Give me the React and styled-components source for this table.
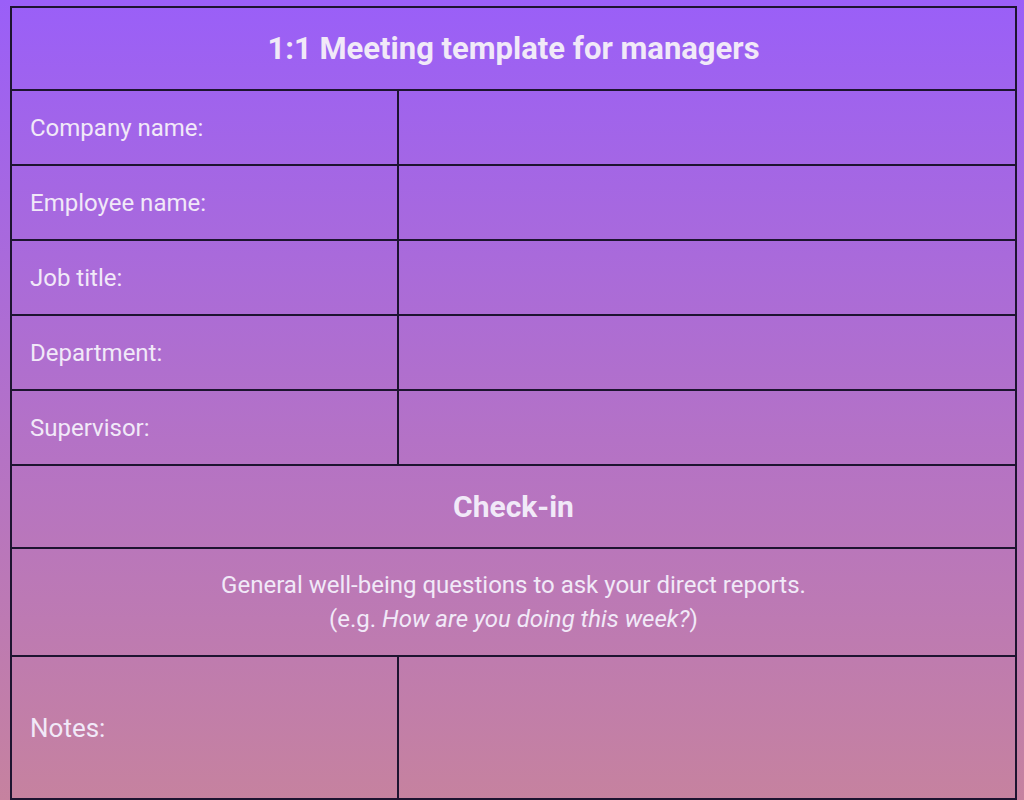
import React from "react";
import styled, { createGlobalStyle } from "styled-components";

const GlobalStyle = createGlobalStyle`
  html, body {
    margin: 0;
    padding: 0;
  }
  body {
    background: linear-gradient(180deg, #9a5ff8 0%, #b472c6 55%, #c6829f 100%);
    min-height: 800px;
    font-family: Roboto, "Liberation Sans", sans-serif;
    color: #f1e9f8;
  }
`;

const Page = styled.div`
  padding: 6px 7px 0 10px;
  height: 800px;
  box-sizing: border-box;
  overflow: hidden;
`;

const Table = styled.div`
  display: grid;
  grid-template-columns: 387px 1fr;
  border-top: 2px solid #1d1430;
  border-left: 2px solid #1d1430;
`;

const Cell = styled.div`
  box-sizing: border-box;
  border-right: 2px solid #1d1430;
  border-bottom: 2px solid #1d1430;
  height: ${(p) => p.$h}px;
  display: flex;
  align-items: center;
`;

const Heading = styled(Cell)`
  grid-column: 1 / span 2;
  justify-content: center;
  font-size: ${(p) => p.$size || 31}px;
  font-weight: 700;
`;

const Label = styled(Cell)`
  padding-left: 18px;
  font-size: ${(p) => p.$size || 24}px;
`;

const Description = styled(Cell)`
  grid-column: 1 / span 2;
  flex-direction: column;
  justify-content: center;
  text-align: center;
  font-size: 24px;
  line-height: 34px;
`;

const fields = [
  "Company name:",
  "Employee name:",
  "Job title:",
  "Department:",
  "Supervisor:",
];

export default function App() {
  return (
    <Page>
      <GlobalStyle />
      <Table>
        <Heading $h={83}>1:1 Meeting template for managers</Heading>
        {fields.map((f) => (
          <React.Fragment key={f}>
            <Label $h={75}>{f}</Label>
            <Cell $h={75} />
          </React.Fragment>
        ))}
        <Heading $h={83} $size={30}>Check-in</Heading>
        <Description $h={108}>
          <div>General well-being questions to ask your direct reports.</div>
          <div>
            (e.g. <i>How are you doing this week?</i>)
          </div>
        </Description>
        <Label $h={143} $size={26}>Notes:</Label>
        <Cell $h={143} />
      </Table>
    </Page>
  );
}
